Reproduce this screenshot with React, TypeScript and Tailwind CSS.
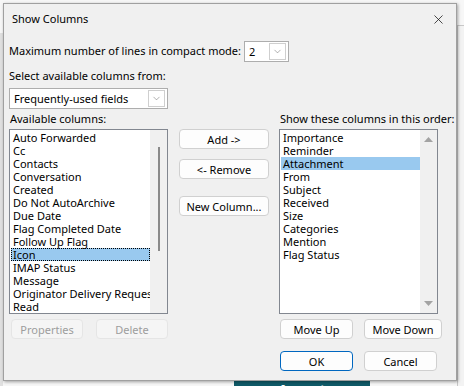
import { X, ChevronDown } from "lucide-react";

const availableCols = [
  "Auto Forwarded",
  "Cc",
  "Contacts",
  "Conversation",
  "Created",
  "Do Not AutoArchive",
  "Due Date",
  "Flag Completed Date",
  "Follow Up Flag",
  "Icon",
  "IMAP Status",
  "Message",
  "Originator Delivery Requested",
  "Read",
];

const shownCols = [
  "Importance",
  "Reminder",
  "Attachment",
  "From",
  "Subject",
  "Received",
  "Size",
  "Categories",
  "Mention",
  "Flag Status",
];

const Btn: React.FC<{ label: string; w: string; disabled?: boolean; primary?: boolean }> = ({
  label,
  w,
  disabled,
  primary,
}) => (
  <div
    className={`${w} h-[20px] flex items-center justify-center rounded-[4px] border text-[11px] leading-none whitespace-nowrap ${
      disabled
        ? "border-[#e5e5e5] bg-[#f5f5f5] text-[#9d9d9d]"
        : primary
        ? "border-[#0067c0] bg-[#fdfdfd] text-black"
        : "border-[#d0d0d0] bg-[#fdfdfd] text-black"
    }`}
  >
    {label}
  </div>
);

const Combo: React.FC<{ value: string; w: string }> = ({ value, w }) => (
  <div className={`${w} h-[21px] flex items-center bg-white border border-[#adadad] pl-[4px] pr-[2px]`}>
    <span className="flex-1 text-[11px] leading-none whitespace-nowrap">{value}</span>
    <div className="w-[17px] h-[17px] flex items-center justify-center border border-[#cfcfcf] bg-white">
      <ChevronDown size={11} strokeWidth={1} color="#555" />
    </div>
  </div>
);

const App: React.FC = () => {
  return (
    <div
      className="relative w-[464px] h-[386px] overflow-hidden bg-[#f7f7f7] text-black"
      style={{ fontFamily: '"Noto Sans", "Open Sans", sans-serif' }}
    >
      {/* background window bits */}
      <div className="absolute left-[457px] top-[25px] w-[7px] h-[361px] border-t border-l border-[#c8c8c8] bg-[#f3f3f3]" />
      <div className="absolute left-[0px] top-[33px] w-[3px] h-[353px] bg-[#e0e0e0]" />
      <div className="absolute left-[234px] top-[381px] w-[136px] h-[20px] bg-[#0f5a68] flex justify-center">
        <span className="text-white font-bold text-[14px] leading-none mt-[2px]">Accept</span>
      </div>

      {/* dialog */}
      <div className="absolute left-[3px] top-[3px] w-[454px] h-[378px] bg-[#f0f0f0] border border-[#a0a0a0] shadow-[1px_1px_3px_rgba(0,0,0,0.35)] flex flex-col">
        <div className="h-[30px] flex items-center justify-between pl-[8px] pr-[3px]">
          <span className="text-[11px]">Show Columns</span>
          <div className="w-[30px] h-[30px] flex items-center justify-center">
            <X size={15} strokeWidth={1.2} color="#111" />
          </div>
        </div>

        <div className="px-[5px] flex flex-col">
          <div className="mt-[7px] h-[21px] flex items-center gap-[3px]">
            <span className="text-[11px] whitespace-nowrap">Maximum number of lines in compact mode:</span>
            <Combo value="2" w="w-[45px]" />
          </div>
          <div className="mt-[6px] text-[11px] leading-[16px] whitespace-nowrap">Select available columns from:</div>
          <div className="mt-[4px]">
            <Combo value="Frequently-used fields" w="w-[159px]" />
          </div>

          <div className="flex">
            {/* left column */}
            <div className="w-[159px] flex flex-col">
              <div className="text-[11px] leading-[20px] pl-[1px] whitespace-nowrap">Available columns:</div>
              <div className="h-[185px] flex border border-[#828790] bg-white">
                <div className="flex-1 pt-[1px] pl-[1px] overflow-hidden">
                  {availableCols.map((c) => (
                    <div
                      key={c}
                      className={`h-[13px] pl-[2px] text-[11px] leading-[13px] whitespace-nowrap ${
                        c === "Icon" ? "bg-[#99c9ef] outline outline-1 outline-dotted outline-black -outline-offset-1" : ""
                      }`}
                    >
                      {c}
                    </div>
                  ))}
                </div>
                <div className="w-[17px] bg-[#f0f0f0] flex justify-center pt-[17px]">
                  <div className="w-[2px] h-[104px] bg-[#8a8a8a]" />
                </div>
              </div>
              <div className="mt-[5px] flex justify-between pl-[2px]">
                <Btn label="Properties" w="w-[72px]" disabled />
                <Btn label="Delete" w="w-[72px]" disabled />
              </div>
            </div>

            {/* middle buttons */}
            <div className="ml-[11px] w-[90px] pt-[20px] flex flex-col">
              <Btn label="Add ->" w="w-[90px]" />
              <div className="mt-[10px]">
                <Btn label="<- Remove" w="w-[90px]" />
              </div>
              <div className="mt-[17px]">
                <Btn label="New Column..." w="w-[90px]" />
              </div>
            </div>

            {/* right column */}
            <div className="ml-[10px] flex flex-col">
              <div className="text-[11px] leading-[20px] pl-[1px] whitespace-nowrap">Show these columns in this order:</div>
              <div className="w-[159px] h-[185px] flex border border-[#828790] bg-white">
                <div className="flex-1 pt-[1px] pl-[1px] overflow-hidden">
                  {shownCols.map((c) => (
                    <div
                      key={c}
                      className={`h-[13px] pl-[2px] text-[11px] leading-[13px] whitespace-nowrap ${
                        c === "Attachment" ? "bg-[#99c9ef]" : ""
                      }`}
                    >
                      {c}
                    </div>
                  ))}
                </div>
                <div className="w-[17px] bg-[#f0f0f0] flex flex-col items-center justify-between py-[7px]">
                  <svg width="9" height="5" viewBox="0 0 9 5">
                    <path d="M0 5 L4.5 0 L9 5 Z" fill="#a3a3a3" />
                  </svg>
                  <svg width="9" height="5" viewBox="0 0 9 5">
                    <path d="M0 0 L4.5 5 L9 0 Z" fill="#a3a3a3" />
                  </svg>
                </div>
              </div>
              <div className="mt-[5px] flex gap-[11px] pl-[1px]">
                <Btn label="Move Up" w="w-[73px]" />
                <Btn label="Move Down" w="w-[78px]" />
              </div>
              <div className="mt-[12px] flex gap-[11px] pl-[1px]">
                <Btn label="OK" w="w-[73px]" primary />
                <Btn label="Cancel" w="w-[73px]" />
              </div>
            </div>
          </div>
        </div>
      </div>
    </div>
  );
};

export default App;
